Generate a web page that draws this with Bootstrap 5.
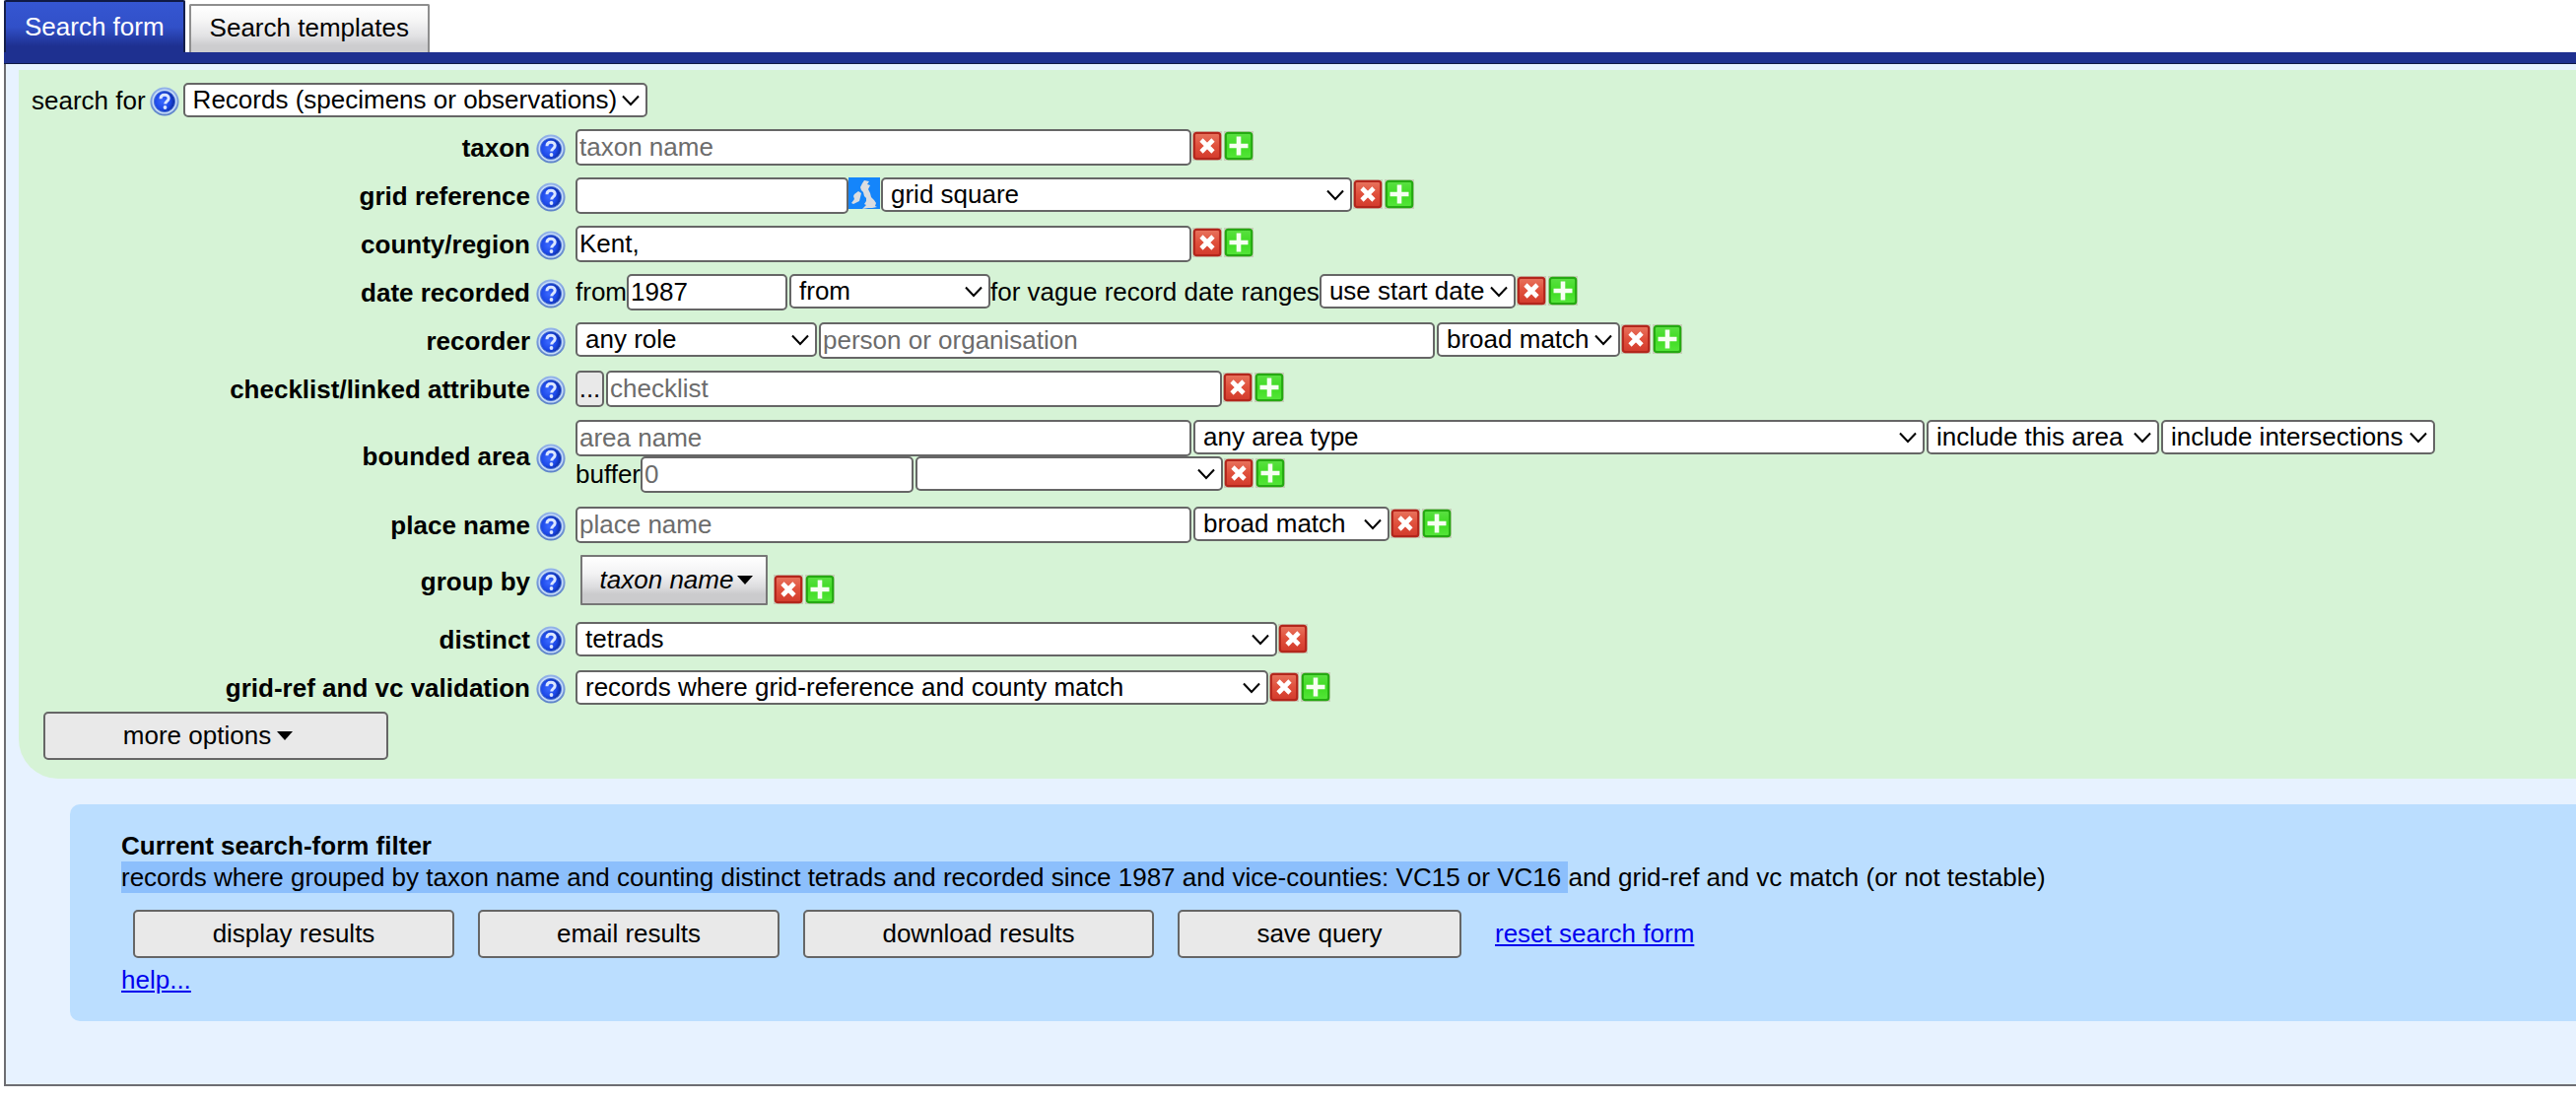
<!DOCTYPE html>
<html lang="en">
<head>
<meta charset="utf-8">
<meta name="viewport" content="width=device-width, initial-scale=1">
<title>Search form</title>
<link href="https://cdn.jsdelivr.net/npm/bootstrap@5.3.0/dist/css/bootstrap.min.css" rel="stylesheet">
<style>
body{font-family:"Liberation Sans",Arial,sans-serif;font-size:26px;line-height:32px;color:#000;background:#fff}
a.plain-link{color:#00e;text-decoration:underline}
.tab-strip{border:0;margin-left:4px;gap:4px;height:53px;align-items:flex-end}
.tab-strip .nav-link{border:2px solid #8e8e8e;border-bottom:0;border-radius:2px 2px 0 0;margin:0;color:#000;height:49px;padding:6px 19px 0 19px;background:linear-gradient(#fff 0,#f6f6f6 30%,#e2e2e4 65%,#cdcdcf 85%,#cdcdcf 100%)}
.tab-strip .nav-link.active{border-color:#151f4c;border-top-color:#101a45;color:#fff;height:53px;padding:9px 19px 0 19px;background:linear-gradient(#3556d2 0,#3150c8 50%,#1e3090 88%,#1e3090 100%)}
.tab-bar{height:12px;margin-left:4px;background:#1e3090;border-bottom:1px solid #101a45}
.tab-panel{margin-left:4px;border-left:2px solid #6d6d72;border-bottom:2px solid #6d6d72;background:#e7f2ff;padding:6px 0 64px 13px}
.criteria{background:#d6f3d6;border-radius:0 0 0 40px;padding:13px 0 19px 13px}
.crit{min-height:37px;margin-top:12px}
.crit-bounded{margin-top:13px;margin-bottom:14px}
.crit-name{flex:0 0 542px;gap:6px;margin-right:10px;font-weight:700}
.ctl{border:2px solid #666;border-radius:5px;background-color:#fff;color:#000;font:inherit;line-height:31px;margin:0;max-width:100%;width:auto}
input.ctl{height:37px;padding:0 2px}
input.ctl::placeholder{color:#6c6c6c;opacity:1}
select.ctl{height:35px;padding:0 26px 0 8px;appearance:none;background-image:url("data:image/svg+xml,%3Csvg xmlns='http://www.w3.org/2000/svg' viewBox='0 0 18 12'%3E%3Cpath d='M1 1.5l8 8.5 8-8.5' fill='none' stroke='%23000' stroke-width='2'/%3E%3C/svg%3E");background-repeat:no-repeat;background-position:right 6px center;background-size:18px 12px}
.ctl+.ctl{margin-left:2px}
.w-name{width:625px}
.w-short{width:277px}
.w-year{width:163px}
.w-scope{width:471px}
.w-square{width:478px}
.w-from{width:204px}
.w-match{width:199px}
.w-role{width:245px}
.w-broad{width:186px}
.w-area{width:742px}
.w-include{width:236px}
.w-intersect{width:278px}
.w-unit{width:312px}
.w-distinct{width:712px}
.w-valid{width:703px}
button.dots{width:29px;height:37px;padding:0;background:#e9e9e9}
.ico-btn{border:0;background:none;padding:0;display:block;line-height:0}
.pair{margin-top:1px}
.help{margin-top:3px}
.map-btn{margin-right:1px}
.word{line-height:36px}
.push,.group-btn{border:2px solid #666;background:#e9e9e9;color:#000;font-size:26px;line-height:32px;border-radius:5px;padding:0}
.push{height:49px}
.push,.plain-link{padding-bottom:2px}
.more{width:350px;margin:6px 0 0 12px;padding-right:16px}
.dropdown-toggle::after{border-top:9px solid;border-left:8px solid transparent;border-right:8px solid transparent;margin-left:6px;vertical-align:4px}
.group-btn{font-style:italic;height:51px;width:190px;border-radius:1px;margin:0 5px;padding:0 0 2px 5px;border-color:#777;background:linear-gradient(#fff 0,#f3f3f4 35%,#dddddf 65%,#cbcbcd 80%,#cbcbcd 100%)}
.group-btn.dropdown-toggle::after{margin-left:4px}
.crit-group .crit-name{padding-top:2px}
.crit-distinct{margin-top:16px}
.filter-box{background:#bbdeff;border-radius:10px 0 0 10px;margin:26px 0 0 52px;padding:26px 52px}
.picked{background:#8cbffc;padding:1px 0;white-space:pre-wrap}
.actions{margin:17px 0 6px 12px;gap:24px}
.w-display{width:326px}
.w-email{width:306px}
.w-download{width:356px}
.w-save{width:288px}
.reset{margin-left:10px}
</style>
<script src="https://cdn.jsdelivr.net/npm/bootstrap@5.3.0/dist/js/bootstrap.bundle.min.js"></script>
</head>
<body>
<svg width="0" height="0" class="position-absolute" aria-hidden="true">
  <defs>
    <radialGradient id="gBlue" cx="40%" cy="50%" r="60%"><stop offset="0" stop-color="#3a68ff"/><stop offset=".6" stop-color="#1d49e8"/><stop offset="1" stop-color="#0a2899"/></radialGradient>
    <linearGradient id="gRing" x2="0" y2="1"><stop offset="0" stop-color="#94b4ea"/><stop offset="1" stop-color="#5c82c8"/></linearGradient>
    <linearGradient id="gRed" x2="0" y2="1"><stop offset="0" stop-color="#e8745e"/><stop offset=".5" stop-color="#e0503c"/><stop offset="1" stop-color="#d23a2c"/></linearGradient>
    <linearGradient id="gGreen" x2="0" y2="1"><stop offset="0" stop-color="#5be043"/><stop offset=".5" stop-color="#3fdc22"/><stop offset="1" stop-color="#55e63a"/></linearGradient>
  </defs>
  <symbol id="i-help" viewBox="0 0 30 30"><circle cx="15" cy="15" r="14.6" fill="url(#gRing)"/><circle cx="15" cy="15" r="12.6" fill="#c6dbf8"/><circle cx="15" cy="15" r="10.6" fill="url(#gBlue)" stroke="#4a72d6" stroke-width="1"/><path d="M11 12.2c0-2.5 1.7-4 4.1-4s4.1 1.5 4.1 3.5c0 2.8-3.5 2.9-3.5 5.8" fill="none" stroke="#dbe6ff" stroke-width="3"/><circle cx="15.5" cy="21" r="1.9" fill="#dbe6ff"/></symbol>
  <symbol id="i-del" viewBox="0 0 32 32"><path d="M1 1h30v30H1z" fill="#c5c6b4" opacity=".8"/><rect x="2.8" y="2.8" width="26.4" height="26.4" rx="2.5" fill="url(#gRed)" stroke="#b3261c" stroke-width="2.2"/><path d="M10 10l12 12m0-12l-12 12" stroke="#fff" stroke-width="4.6"/></symbol>
  <symbol id="i-add" viewBox="0 0 32 32"><path d="M1 1h30v30H1z" fill="#c5c6b4" opacity=".8"/><rect x="2.8" y="2.8" width="26.4" height="26.4" rx="2.5" fill="url(#gGreen)" stroke="#25a912" stroke-width="2.2"/><path d="M16 6.5v19M6.5 16h19" stroke="#f6fff2" stroke-width="4.6"/></symbol>
  <symbol id="i-map" viewBox="0 0 32 32"><path d="M0 0h32v32H0z" fill="#1485fb"/><path d="M14 6l2-3 5 1-2 3 3 1-2 4 2 4 1 4 3 3 2 3-1 3 2 1-5 1h-4l-6 1 4-4-2-1 2-3v-3l-2-2-1-4-2-2-1-3zM6 17l4-3 3 2-1 4-1 4-6 3-2-1 3-4-1-3z" fill="#dbdde0"/></symbol>
</svg>

<nav class="nav nav-tabs tab-strip">
  <a class="nav-link active" href="#form" aria-current="page">Search form</a>
  <a class="nav-link" href="#templates">Search templates</a>
</nav>
<div class="tab-bar"></div>

<main class="tab-panel" id="form">
  <form class="criteria">
    <div class="d-flex align-items-center">
      <label for="scope">search for</label>
      <button type="button" class="ico-btn help ms-1" aria-label="help: search for"><svg width="30" height="30"><use href="#i-help"/></svg></button>
      <select id="scope" class="ctl w-scope ms-1"><option>Records (specimens or observations)</option></select>
    </div>

    <div class="d-flex align-items-center crit">
      <div class="crit-name d-flex justify-content-end align-items-center"><label for="taxon">taxon</label><button type="button" class="ico-btn help" aria-label="help: taxon"><svg width="30" height="30"><use href="#i-help"/></svg></button></div>
      <div class="d-flex flex-wrap align-items-start">
        <input id="taxon" type="text" class="ctl w-name" placeholder="taxon name">
        <div class="d-flex pair"><button type="button" class="ico-btn" aria-label="remove"><svg width="32" height="32"><use href="#i-del"/></svg></button><button type="button" class="ico-btn" aria-label="add"><svg width="32" height="32"><use href="#i-add"/></svg></button></div>
      </div>
    </div>

    <div class="d-flex align-items-center crit">
      <div class="crit-name d-flex justify-content-end align-items-center"><label for="gridref">grid reference</label><button type="button" class="ico-btn help" aria-label="help: grid reference"><svg width="30" height="30"><use href="#i-help"/></svg></button></div>
      <div class="d-flex flex-wrap align-items-start">
        <input id="gridref" type="text" class="ctl w-short">
        <button type="button" class="ico-btn map-btn" aria-label="pick on map"><svg width="32" height="32"><use href="#i-map"/></svg></button>
        <select class="ctl w-square" aria-label="grid reference type"><option>grid square</option></select>
        <div class="d-flex pair"><button type="button" class="ico-btn" aria-label="remove"><svg width="32" height="32"><use href="#i-del"/></svg></button><button type="button" class="ico-btn" aria-label="add"><svg width="32" height="32"><use href="#i-add"/></svg></button></div>
      </div>
    </div>

    <div class="d-flex align-items-center crit">
      <div class="crit-name d-flex justify-content-end align-items-center"><label for="county">county/region</label><button type="button" class="ico-btn help" aria-label="help: county/region"><svg width="30" height="30"><use href="#i-help"/></svg></button></div>
      <div class="d-flex flex-wrap align-items-start">
        <input id="county" type="text" class="ctl w-name" value="Kent,">
        <div class="d-flex pair"><button type="button" class="ico-btn" aria-label="remove"><svg width="32" height="32"><use href="#i-del"/></svg></button><button type="button" class="ico-btn" aria-label="add"><svg width="32" height="32"><use href="#i-add"/></svg></button></div>
      </div>
    </div>

    <div class="d-flex align-items-center crit">
      <div class="crit-name d-flex justify-content-end align-items-center"><label for="year">date recorded</label><button type="button" class="ico-btn help" aria-label="help: date recorded"><svg width="30" height="30"><use href="#i-help"/></svg></button></div>
      <div class="d-flex flex-wrap align-items-start">
        <label class="word" for="year">from</label>
        <input id="year" type="text" class="ctl w-year" value="1987">
        <select class="ctl w-from" aria-label="date range"><option>from</option></select>
        <label class="word" for="vague">for vague record date ranges</label>
        <select id="vague" class="ctl w-match"><option>use start date</option></select>
        <div class="d-flex pair"><button type="button" class="ico-btn" aria-label="remove"><svg width="32" height="32"><use href="#i-del"/></svg></button><button type="button" class="ico-btn" aria-label="add"><svg width="32" height="32"><use href="#i-add"/></svg></button></div>
      </div>
    </div>

    <div class="d-flex align-items-center crit">
      <div class="crit-name d-flex justify-content-end align-items-center"><label for="recorder">recorder</label><button type="button" class="ico-btn help" aria-label="help: recorder"><svg width="30" height="30"><use href="#i-help"/></svg></button></div>
      <div class="d-flex flex-wrap align-items-start">
        <select class="ctl w-role" aria-label="role"><option>any role</option></select>
        <input id="recorder" type="text" class="ctl w-name" placeholder="person or organisation">
        <select class="ctl w-broad" aria-label="recorder match"><option>broad match</option></select>
        <div class="d-flex pair"><button type="button" class="ico-btn" aria-label="remove"><svg width="32" height="32"><use href="#i-del"/></svg></button><button type="button" class="ico-btn" aria-label="add"><svg width="32" height="32"><use href="#i-add"/></svg></button></div>
      </div>
    </div>

    <div class="d-flex align-items-center crit">
      <div class="crit-name d-flex justify-content-end align-items-center"><label for="checklist">checklist/linked attribute</label><button type="button" class="ico-btn help" aria-label="help: checklist"><svg width="30" height="30"><use href="#i-help"/></svg></button></div>
      <div class="d-flex flex-wrap align-items-start">
        <button type="button" class="ctl dots">...</button>
        <input id="checklist" type="text" class="ctl w-name" placeholder="checklist">
        <div class="d-flex pair"><button type="button" class="ico-btn" aria-label="remove"><svg width="32" height="32"><use href="#i-del"/></svg></button><button type="button" class="ico-btn" aria-label="add"><svg width="32" height="32"><use href="#i-add"/></svg></button></div>
      </div>
    </div>

    <div class="d-flex align-items-center crit crit-bounded">
      <div class="crit-name d-flex justify-content-end align-items-center"><label for="area">bounded area</label><button type="button" class="ico-btn help" aria-label="help: bounded area"><svg width="30" height="30"><use href="#i-help"/></svg></button></div>
      <div>
        <div class="d-flex flex-wrap align-items-start">
          <input id="area" type="text" class="ctl w-name" placeholder="area name">
          <select class="ctl w-area" aria-label="area type"><option>any area type</option></select>
          <select class="ctl w-include" aria-label="inclusion"><option>include this area</option></select>
          <select class="ctl w-intersect" aria-label="intersections"><option>include intersections</option></select>
        </div>
        <div class="d-flex flex-wrap align-items-start">
          <label class="word" for="buffer">buffer</label>
          <input id="buffer" type="text" class="ctl w-short" placeholder="0">
          <select class="ctl w-unit" aria-label="buffer unit"><option></option></select>
          <div class="d-flex pair"><button type="button" class="ico-btn" aria-label="remove"><svg width="32" height="32"><use href="#i-del"/></svg></button><button type="button" class="ico-btn" aria-label="add"><svg width="32" height="32"><use href="#i-add"/></svg></button></div>
        </div>
      </div>
    </div>

    <div class="d-flex align-items-center crit">
      <div class="crit-name d-flex justify-content-end align-items-center"><label for="place">place name</label><button type="button" class="ico-btn help" aria-label="help: place name"><svg width="30" height="30"><use href="#i-help"/></svg></button></div>
      <div class="d-flex flex-wrap align-items-start">
        <input id="place" type="text" class="ctl w-name" placeholder="place name">
        <select class="ctl w-match" aria-label="place match"><option>broad match</option></select>
        <div class="d-flex pair"><button type="button" class="ico-btn" aria-label="remove"><svg width="32" height="32"><use href="#i-del"/></svg></button><button type="button" class="ico-btn" aria-label="add"><svg width="32" height="32"><use href="#i-add"/></svg></button></div>
      </div>
    </div>

    <div class="d-flex align-items-center crit crit-group">
      <div class="crit-name d-flex justify-content-end align-items-center"><label for="group">group by</label><button type="button" class="ico-btn help" aria-label="help: group by"><svg width="30" height="30"><use href="#i-help"/></svg></button></div>
      <div class="d-flex flex-wrap align-items-end">
        <button id="group" type="button" class="group-btn dropdown-toggle">taxon name</button>
        <div class="d-flex"><button type="button" class="ico-btn" aria-label="remove"><svg width="32" height="32"><use href="#i-del"/></svg></button><button type="button" class="ico-btn" aria-label="add"><svg width="32" height="32"><use href="#i-add"/></svg></button></div>
      </div>
    </div>

    <div class="d-flex align-items-center crit crit-distinct">
      <div class="crit-name d-flex justify-content-end align-items-center"><label for="distinct">distinct</label><button type="button" class="ico-btn help" aria-label="help: distinct"><svg width="30" height="30"><use href="#i-help"/></svg></button></div>
      <div class="d-flex flex-wrap align-items-start">
        <select id="distinct" class="ctl w-distinct"><option>tetrads</option></select>
        <div class="d-flex pair"><button type="button" class="ico-btn" aria-label="remove"><svg width="32" height="32"><use href="#i-del"/></svg></button></div>
      </div>
    </div>

    <div class="d-flex align-items-center crit">
      <div class="crit-name d-flex justify-content-end align-items-center"><label for="valid">grid-ref and vc validation</label><button type="button" class="ico-btn help" aria-label="help: validation"><svg width="30" height="30"><use href="#i-help"/></svg></button></div>
      <div class="d-flex flex-wrap align-items-start">
        <select id="valid" class="ctl w-valid"><option>records where grid-reference and county match</option></select>
        <div class="d-flex pair"><button type="button" class="ico-btn" aria-label="remove"><svg width="32" height="32"><use href="#i-del"/></svg></button><button type="button" class="ico-btn" aria-label="add"><svg width="32" height="32"><use href="#i-add"/></svg></button></div>
      </div>
    </div>

    <button type="button" class="push more dropdown-toggle d-block">more options</button>
  </form>

  <section class="filter-box">
    <div class="fw-bold">Current search-form filter</div>
    <div><span class="picked">records where grouped by taxon name and counting distinct tetrads and recorded since 1987 and vice-counties: VC15 or VC16 </span>and grid-ref and vc match (or not testable)</div>
    <div class="d-flex flex-wrap align-items-center actions">
      <button type="button" class="push w-display">display results</button>
      <button type="button" class="push w-email">email results</button>
      <button type="button" class="push w-download">download results</button>
      <button type="button" class="push w-save">save query</button>
      <a class="plain-link reset" href="#reset">reset search form</a>
    </div>
    <a class="plain-link" href="#help">help...</a>
  </section>
</main>
</body>
</html>
